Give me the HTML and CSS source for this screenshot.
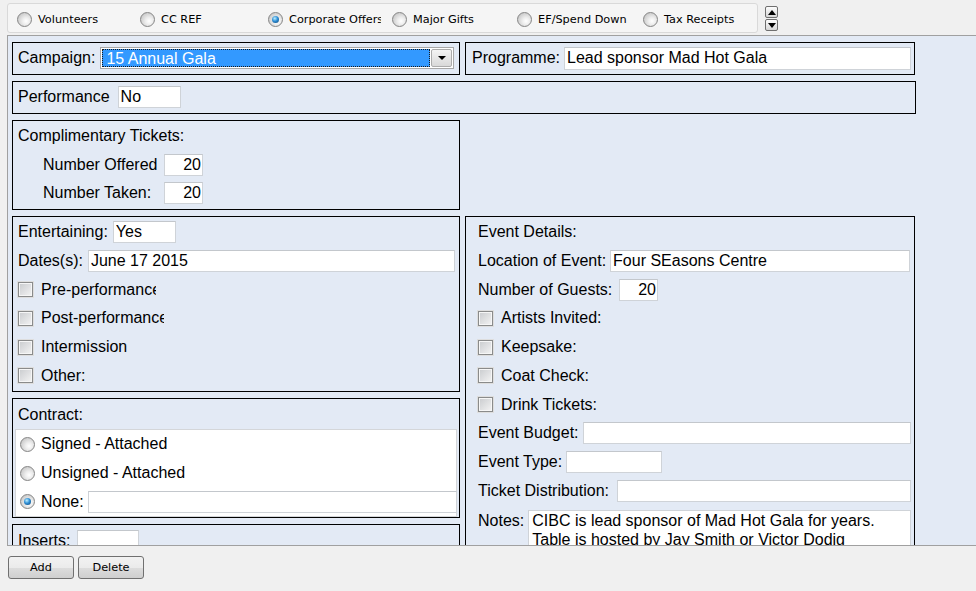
FILE: index.html
```html
<!DOCTYPE html>
<html>
<head>
<meta charset="utf-8">
<link rel="stylesheet" href="styles.css">
</head>
<body>
<div class="topbar">
  <div class="tabs">
    <div class="tab t1"><span class="radio"></span><span class="tab-text">Volunteers</span></div>
    <div class="tab t2"><span class="radio"></span><span class="tab-text">CC REF</span></div>
    <div class="tab t3"><span class="radio on"></span><span class="tab-text tab-clip">Corporate Offers</span></div>
    <div class="tab t4"><span class="radio"></span><span class="tab-text">Major Gifts</span></div>
    <div class="tab t5"><span class="radio"></span><span class="tab-text">EF/Spend Down</span></div>
    <div class="tab t6"><span class="radio"></span><span class="tab-text">Tax Receipts</span></div>
  </div>
  <div class="spin"><span class="spin-btn up"></span><span class="spin-btn down"></span></div>
</div>

<div class="main form">
  <div class="row">
    <div class="box box-left">
      <div class="line"><span>Campaign:</span>
        <div class="select"><span class="sel-val">15 Annual Gala</span><span class="sel-btn"></span></div>
      </div>
    </div>
    <div class="box box-programme">
      <div class="line"><span>Programme:</span><input class="field f-programme" value="Lead sponsor Mad Hot Gala"></div>
    </div>
  </div>

  <div class="box box-performance">
    <div class="line"><span>Performance</span><input class="field f-short gap-8" value="No"></div>
  </div>

  <div class="grid">
    <div class="box box-left compl">
      <div class="line"><span>Complimentary Tickets:</span></div>
      <div class="line indent"><span class="num-label">Number Offered</span><input class="field f-num num" value="20"></div>
      <div class="line indent"><span class="num-label">Number Taken:</span><input class="field f-num num" value="20"></div>
    </div>

    <div class="stack">
      <div class="box box-left">
        <div class="line"><span>Entertaining:</span><input class="field f-short gap-5" value="Yes"></div>
        <div class="line"><span>Dates(s):</span><input class="field f-dates gap-5" value="June 17 2015"></div>
        <div class="line"><span class="check"></span><span class="clip clip-pre">Pre-performance</span></div>
        <div class="line"><span class="check"></span><span class="clip clip-post">Post-performance</span></div>
        <div class="line"><span class="check"></span><span>Intermission</span></div>
        <div class="line"><span class="check"></span><span>Other:</span></div>
      </div>

      <div class="box box-left contract">
        <div class="line head"><span>Contract:</span></div>
        <div class="panel">
          <div class="line"><span class="radio"></span><span>Signed - Attached</span></div>
          <div class="line"><span class="radio"></span><span>Unsigned - Attached</span></div>
          <div class="line"><span class="radio on"></span><span>None:</span><input class="field f-none" value=""></div>
        </div>
      </div>

      <div class="box box-left">
        <div class="line"><span>Inserts:</span><input class="field f-inserts gap-6" value=""></div>
      </div>
    </div>

    <div class="box event">
      <div class="line"><span>Event Details:</span></div>
      <div class="line"><span>Location of Event:</span><input class="field f-location" value="Four SEasons Centre"></div>
      <div class="line"><span>Number of Guests:</span><input class="field f-num num gap-7" value="20"></div>
      <div class="line"><span class="check"></span><span>Artists Invited:</span></div>
      <div class="line"><span class="check"></span><span>Keepsake:</span></div>
      <div class="line"><span class="check"></span><span>Coat Check:</span></div>
      <div class="line"><span class="check"></span><span>Drink Tickets:</span></div>
      <div class="line"><span>Event Budget:</span><input class="field f-budget" value=""></div>
      <div class="line"><span>Event Type:</span><input class="field f-type" value=""></div>
      <div class="line"><span>Ticket Distribution:</span><input class="field f-ticket gap-8" value=""></div>
      <div class="notes"><span class="notes-label">Notes:</span><div class="textarea">CIBC is lead sponsor of Mad Hot Gala for years.<br>Table is hosted by Jay Smith or Victor Dodig</div></div>
    </div>
  </div>
</div>

<div class="actions">
  <button class="btn">Add</button>
  <button class="btn">Delete</button>
</div>
</body>
</html>
```
FILE: styles.css
```css
* { box-sizing: border-box; }
html, body { margin: 0; padding: 0; }
body {
  width: 976px;
  height: 591px;
  overflow: hidden;
  background: #f0f0f0;
  font-family: "DejaVu Sans", Verdana, sans-serif;
  font-size: 11.3px;
  color: #000;
}

/* ---------- top radio strip ---------- */
.topbar {
  height: 35px;
  display: flex;
  align-items: flex-start;
  padding: 3px 0 0 7px;
}
.tabs {
  width: 751px;
  height: 30px;
  border: 1px solid #d9d9d9;
  border-radius: 3px;
  background: #f5f5f5;
  display: flex;
  align-items: center;
  padding: 2px 0 0 9px;
}
.tab { display: flex; align-items: center; flex: none; }
.t1 { width: 123px; }
.t2 { width: 128px; }
.t3 { width: 124px; }
.t4 { width: 125px; }
.t5 { width: 126px; }
.tab .radio { margin-right: 6px; }
.tab-text { white-space: nowrap; }
.tab-clip { width: 92px; overflow: hidden; }

.spin {
  margin: 3px 0 0 7px;
  display: flex;
  flex-direction: column;
  gap: 1px;
}
.spin-btn {
  width: 13px;
  height: 12px;
  border: 1px solid #6f6f6f;
  border-radius: 2px;
  background: linear-gradient(#fdfdfd, #d6d6d6);
  display: flex;
  align-items: center;
  justify-content: center;
}
.spin-btn::before {
  content: "";
  border-left: 4px solid transparent;
  border-right: 4px solid transparent;
}
.spin-btn.up::before { border-bottom: 5px solid #000; }
.spin-btn.down::before { border-top: 5px solid #000; }

/* ---------- radio / checkbox ---------- */
.radio {
  width: 15px;
  height: 15px;
  border-radius: 50%;
  border: 1px solid #858585;
  background: radial-gradient(circle at 62% 62%, #ffffff 0%, #eeeeee 30%, #cfcfcf 70%, #b2b2b2 100%);
  flex: none;
  position: relative;
}
.radio.on::after {
  content: "";
  position: absolute;
  left: 3px;
  top: 3px;
  width: 7px;
  height: 7px;
  border-radius: 50%;
  background: radial-gradient(circle at 40% 35%, #bff0ff 0%, #2f8fd6 45%, #0a3f6e 100%);
}
.check {
  width: 15px;
  height: 15px;
  flex: none;
  border: 1px solid #8a8b8b;
  background: linear-gradient(135deg, #c9cbce, #f4f4f4);
  box-shadow: 0 0 0 1px #dedede, inset 0 0 0 1px #f6f6f6;
  margin-right: 8px;
}

/* ---------- main form area ---------- */
.form {
  font-family: "Liberation Sans", Arial, sans-serif;
  font-size: 16px;
}
.main {
  margin-left: 7px;
  height: 511px;
  border: 1px solid #a0a0a0;
  border-right: 0;
  background: #e3eaf5;
  padding: 6px 0 0 4px;
  overflow: hidden;
  display: flex;
  flex-direction: column;
  gap: 6px;
}
.row { display: flex; gap: 5px; flex-shrink: 0; }
.box {
  border: 1px solid #000;
  padding: 1px 4px 1px 5px;
  flex-shrink: 0;
}
.box-left { width: 448px; }
.box-programme { width: 450px; padding-left: 6px; }
.box-performance { width: 904px; }
.line {
  display: flex;
  align-items: center;
  height: 28.75px;
  white-space: nowrap;
}

.grid {
  display: grid;
  grid-template-columns: 448px 450px;
  column-gap: 5px;
  row-gap: 6px;
  align-items: start;
  flex-shrink: 0;
}
.compl { grid-column: 1; grid-row: 1; }
.stack { grid-column: 1; grid-row: 2; display: flex; flex-direction: column; gap: 6px; }
.event { grid-column: 2; grid-row: 2; width: 450px; padding-left: 12px; }

.indent { padding-left: 25px; }
.num-label { width: 117px; flex: none; }

.clip { overflow: hidden; }
.clip-pre { width: 115px; }
.clip-post { width: 123px; }

.contract { padding: 1px 2px 0 2px; }
.contract .head { padding-left: 3px; }
.panel {
  background: #fff;
  border: 1px solid #d4d6d9;
  padding-left: 4px;
}
.panel .radio { margin-right: 6px; }

/* ---------- fields ---------- */
.field {
  height: 22px;
  border: 1px solid #cfd3d8;
  border-top-color: #c3c7cc;
  background: #fff;
  font-family: "Liberation Sans", Arial, sans-serif;
  font-size: 16px;
  color: #000;
  padding: 0 2px;
  margin: 0 0 0 4px;
  outline: none;
  flex: none;
}
.num { text-align: right; padding-right: 1px; }
.gap-5 { margin-left: 5px; }
.gap-6 { margin-left: 6.5px; }
.gap-7 { margin-left: 6.7px; }
.gap-8 { margin-left: 8px; }

.f-programme { width: 347px; height: 23px; }
.f-short { width: 63px; }
.f-num { width: 39px; }
.f-dates { width: 367px; }
.f-none { width: 369px; }
.f-inserts { width: 62px; }
.f-location { width: 300px; }
.f-budget { width: 328px; }
.f-type { width: 96px; }
.f-ticket { width: 294px; }

.select {
  display: flex;
  width: 354px;
  height: 22px;
  margin-left: 5px;
  border: 1px solid #a8a8a8;
  background: #fff;
  padding: 1px;
  flex: none;
}
.sel-val {
  flex: 1;
  background: #3399ff;
  color: #fff;
  border: 1px dotted #1a1a1a;
  padding-left: 3px;
  line-height: 17px;
  font-size: 16px;
  overflow: hidden;
}
.sel-btn {
  width: 21px;
  margin-left: 1px;
  border: 1px solid #acacac;
  border-radius: 2px;
  background: linear-gradient(#f4f4f4, #d9d9d9);
  display: flex;
  align-items: center;
  justify-content: center;
}
.sel-btn::before {
  content: "";
  border-left: 4px solid transparent;
  border-right: 4px solid transparent;
  border-top: 4px solid #000;
}

.notes {
  display: flex;
  align-items: flex-start;
  padding-top: 4.5px;
}
.notes-label { padding-top: 1px; line-height: 19px; }
.textarea {
  width: 383px;
  height: 70px;
  margin-left: 4px;
  border: 1px solid #cfd3d8;
  background: #fff;
  padding: 0 3px;
  line-height: 19px;
  white-space: nowrap;
  flex: none;
}

/* ---------- bottom buttons ---------- */
.actions {
  display: flex;
  gap: 4px;
  padding: 10px 0 0 8px;
}
.btn {
  width: 66px;
  height: 23px;
  border: 1px solid #707070;
  border-radius: 3px;
  background: linear-gradient(#f2f2f2 0%, #ebebeb 50%, #dddddd 51%, #cfcfcf 100%);
  font-family: "DejaVu Sans", Verdana, sans-serif;
  font-size: 11.3px;
  color: #000;
  padding: 0;
}
```
